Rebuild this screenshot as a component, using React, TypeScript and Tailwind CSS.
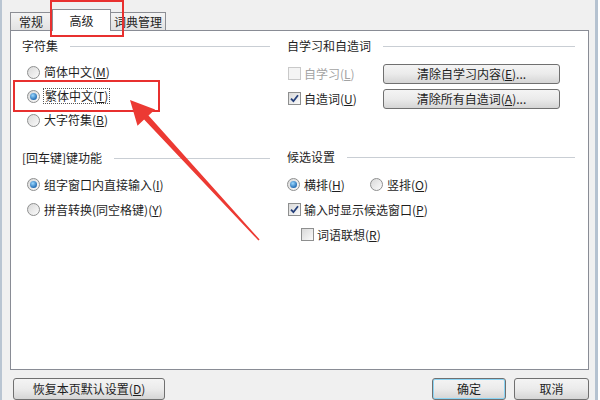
import type { ReactElement, ReactNode } from "react";

// ── small win7-style controls ────────────────────────────────────────────────

function Radio({ checked = false }: { checked?: boolean }): ReactElement {
  return (
    <span className="flex h-[13px] w-[13px] shrink-0 items-center justify-center rounded-full border border-[#8e8f8f] bg-linear-to-br from-[#d9d9d9] to-[#fbfbfb]">
      {checked && (
        <span className="h-[7px] w-[7px] rounded-full bg-[radial-gradient(circle_at_40%_35%,#9ad8ff,#1d67b0_75%)]" />
      )}
    </span>
  );
}

function Check({
  checked = false,
  disabled = false,
}: {
  checked?: boolean;
  disabled?: boolean;
}): ReactElement {
  return (
    <span
      className={
        disabled
          ? "flex h-[13px] w-[13px] shrink-0 items-center justify-center border border-[#c9c9c9] bg-[#f4f4f4]"
          : "flex h-[13px] w-[13px] shrink-0 items-center justify-center border border-[#8e8f8f] bg-linear-to-br from-[#d9d9d9] to-[#fbfbfb]"
      }
    >
      {checked && (
        <svg width="9" height="9" viewBox="0 0 9 9">
          <path
            d="M1 4.6 L3.4 7.2 L8 1.2"
            fill="none"
            stroke="#243f7a"
            strokeWidth="1.8"
          />
        </svg>
      )}
    </span>
  );
}

// Label text followed by "(X)" with the access key underlined.
function Mn({ text, k }: { text: string; k: string }): ReactElement {
  return (
    <span className="whitespace-nowrap">
      {text}(<u>{k}</u>)
    </span>
  );
}

function GroupHead({ title }: { title: string }): ReactElement {
  return (
    <div className="flex h-[16px] items-center gap-[12px]">
      <span className="whitespace-nowrap">{title}</span>
      <span className="h-px flex-1 bg-[#c9ced4]" />
    </div>
  );
}

function Button({
  children,
  className = "",
}: {
  children: ReactNode;
  className?: string;
}): ReactElement {
  return (
    <div
      className={`flex items-center justify-center rounded-[3px] border border-[#707070] bg-linear-to-b from-[#f4f4f4] via-[#ebebeb] to-[#d5d5d5] ${className}`}
    >
      {children}
    </div>
  );
}

// ── page ─────────────────────────────────────────────────────────────────────

export default function App(): ReactElement {
  return (
    <div className="relative flex h-[400px] w-[600px] overflow-hidden bg-[#f0f0f0] font-['Noto_Sans_CJK_SC','Noto_Sans',sans-serif] text-[12px] leading-[16px] text-[#1e1e1e]">
      {/* left window frame */}
      <div className="w-[2px] shrink-0 bg-[#b9c5d2]" />

      <div className="ml-[8px] flex w-[579px] shrink-0 flex-col pt-[9px]">
        {/* tabs */}
        <div className="flex h-[21px] items-end">
          <div className="flex h-[18px] w-[42px] items-center justify-center border border-b-0 border-[#8c8e94] bg-linear-to-b from-[#f4f4f4] to-[#e2e2e2]">
            常规
          </div>
          <div className="relative z-10 -mb-px flex h-[22px] w-[59px] items-center justify-center border border-b-0 border-[#8c8e94] bg-white">
            高级
          </div>
          <div className="flex h-[18px] w-[55px] items-center justify-center border border-b-0 border-l-0 border-[#8c8e94] bg-linear-to-b from-[#f4f4f4] to-[#e2e2e2]">
            词典管理
          </div>
        </div>

        {/* tab panel */}
        <div className="flex h-[355px] border border-[#898c95] bg-white">
          {/* left column */}
          <div className="flex w-[276px] flex-col pl-[11px] pr-[17px] pt-[7px]">
            <GroupHead title="字符集" />
            <div className="mt-[6px] flex flex-col">
              <div className="flex h-[24px] items-center gap-[4px] pl-[5px]">
                <Radio />
                <Mn text="简体中文" k="M" />
              </div>
              <div className="flex h-[24px] items-center gap-[3px] pl-[5px]">
                <Radio checked />
                <span className="border border-dotted border-[#555] px-px leading-[14px]">
                  <Mn text="繁体中文" k="T" />
                </span>
              </div>
              <div className="flex h-[24px] items-center gap-[4px] pl-[5px]">
                <Radio />
                <Mn text="大字符集" k="B" />
              </div>
            </div>

            <div className="mt-[18px]">
              <GroupHead title="[回车键]键功能" />
            </div>
            <div className="mt-[6px] flex flex-col">
              <div className="flex h-[25px] items-center gap-[4px] pl-[5px]">
                <Radio checked />
                <Mn text="组字窗口内直接输入" k="I" />
              </div>
              <div className="flex h-[25px] items-center gap-[4px] pl-[5px]">
                <Radio />
                <Mn text="拼音转换(同空格键)" k="Y" />
              </div>
            </div>
          </div>

          {/* right column */}
          <div className="flex flex-1 flex-col pr-[13px] pt-[7px]">
            <GroupHead title="自学习和自造词" />
            <div className="mt-[7px] grid grid-cols-[96px_177px] grid-rows-[25px_25px] items-center">
              <div className="flex items-center gap-[3px] pl-px text-[#a3a3a3]">
                <Check disabled />
                <Mn text="自学习" k="L" />
              </div>
              <Button className="h-[20px]">
                <Mn text="清除自学习内容" k="E" />
                ...
              </Button>
              <div className="flex items-center gap-[3px] pl-px">
                <Check checked />
                <Mn text="自造词" k="U" />
              </div>
              <Button className="h-[20px]">
                <Mn text="清除所有自造词" k="A" />
                ...
              </Button>
            </div>

            <div className="mt-[38px]">
              <GroupHead title="候选设置" />
            </div>
            <div className="mt-[7px] flex flex-col">
              <div className="flex h-[25px] items-center">
                <div className="flex w-[83px] items-center gap-[4px] pl-[0px]">
                  <Radio checked />
                  <Mn text="横排" k="H" />
                </div>
                <div className="flex items-center gap-[4px]">
                  <Radio />
                  <Mn text="竖排" k="O" />
                </div>
              </div>
              <div className="flex h-[25px] items-center gap-[3px] pl-px">
                <Check checked />
                <Mn text="输入时显示候选窗口" k="P" />
              </div>
              <div className="flex h-[25px] items-center gap-[3px] pl-[14px]">
                <Check />
                <Mn text="词语联想" k="R" />
              </div>
            </div>
          </div>
        </div>

        {/* dialog buttons */}
        <div className="mt-[8px] flex h-[23px]">
          <Button className="ml-[3px] w-[152px]">
            <Mn text="恢复本页默认设置" k="D" />
          </Button>
          <div className="ml-auto flex gap-[8px]">
            <Button className="w-[74px] border-[#3c7fb1] shadow-[inset_0_0_0_1px_#8ad4f4]">
              确定
            </Button>
            <Button className="w-[75px]">取消</Button>
          </div>
        </div>
      </div>

      {/* right window frame */}
      <div className="ml-[6px] w-[3px] shrink-0 bg-[#b5c2d0]" />
      <div className="flex-1 bg-white" />

      {/* red annotations drawn over the dialog */}
      <div className="pointer-events-none absolute left-[50px] top-0 h-[37px] w-[74px] border-2 border-[#e8302f]" />
      <div className="pointer-events-none absolute left-[13px] top-[80px] h-[32px] w-[147px] border-2 border-[#e8302f]" />
      <svg
        className="pointer-events-none absolute left-0 top-0"
        width="600"
        height="400"
        viewBox="0 0 600 400"
      >
        <polygon
          points="130,100 155.1,109.5 148.5,115.6 259.6,239.5 258.4,240.5 144.1,119.6 137.5,125.7"
          fill="#ec3a33"
        />
      </svg>
    </div>
  );
}
